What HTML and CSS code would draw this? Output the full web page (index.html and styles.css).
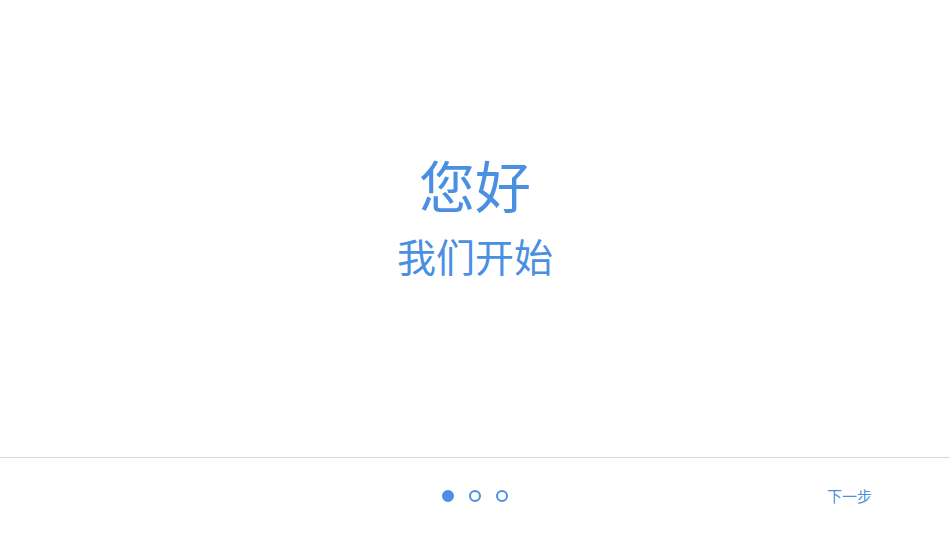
FILE: index.html
```html
<!DOCTYPE html>
<html lang="zh">
<head>
<meta charset="utf-8">
<link rel="stylesheet" href="styles.css">
</head>
<body>
<div class="page">
  <main class="hero">
    <h1 class="title">您好</h1>
    <p class="subtitle">我们开始</p>
  </main>
  <footer class="footer">
    <div class="spacer"></div>
    <div class="dots">
      <span class="dot active"></span>
      <span class="dot"></span>
      <span class="dot"></span>
    </div>
    <div class="actions">
      <button class="next">下一步</button>
    </div>
  </footer>
</div>
</body>
</html>
```
FILE: styles.css
```css
html, body {
  margin: 0;
  padding: 0;
  background: #fff;
}
body {
  font-family: "Noto Sans CJK SC", "Noto Sans", sans-serif;
  color: #4a90e2;
}
.page {
  width: 950px;
  height: 534px;
  display: flex;
  flex-direction: column;
}
.hero {
  height: 457px;
  display: flex;
  flex-direction: column;
  align-items: center;
  justify-content: center;
  padding-bottom: 25px;
  box-sizing: border-box;
}
.title {
  margin: 0 0 5px;
  font-size: 56px;
  font-weight: 400;
  line-height: 72px;
}
.subtitle {
  margin: 0;
  font-size: 39px;
  font-weight: 400;
  line-height: 60px;
}
.footer {
  flex: 1;
  border-top: 1px solid #d6d6d6;
  display: grid;
  grid-template-columns: 1fr auto 1fr;
  align-items: center;
}
.dots {
  display: flex;
  gap: 15px;
  align-items: center;
}
.dot {
  width: 12px;
  height: 12px;
  box-sizing: border-box;
  border-radius: 50%;
  border: 2px solid #4a90e2;
}
.dot.active {
  background: #4a90e2;
}
.actions {
  display: flex;
  justify-content: flex-end;
  padding-right: 78px;
  padding-bottom: 2px;
}
.next {
  background: none;
  border: none;
  padding: 0;
  font-family: "Noto Sans CJK SC", sans-serif;
  font-size: 15px;
  color: #4a90e2;
  cursor: pointer;
}
```
